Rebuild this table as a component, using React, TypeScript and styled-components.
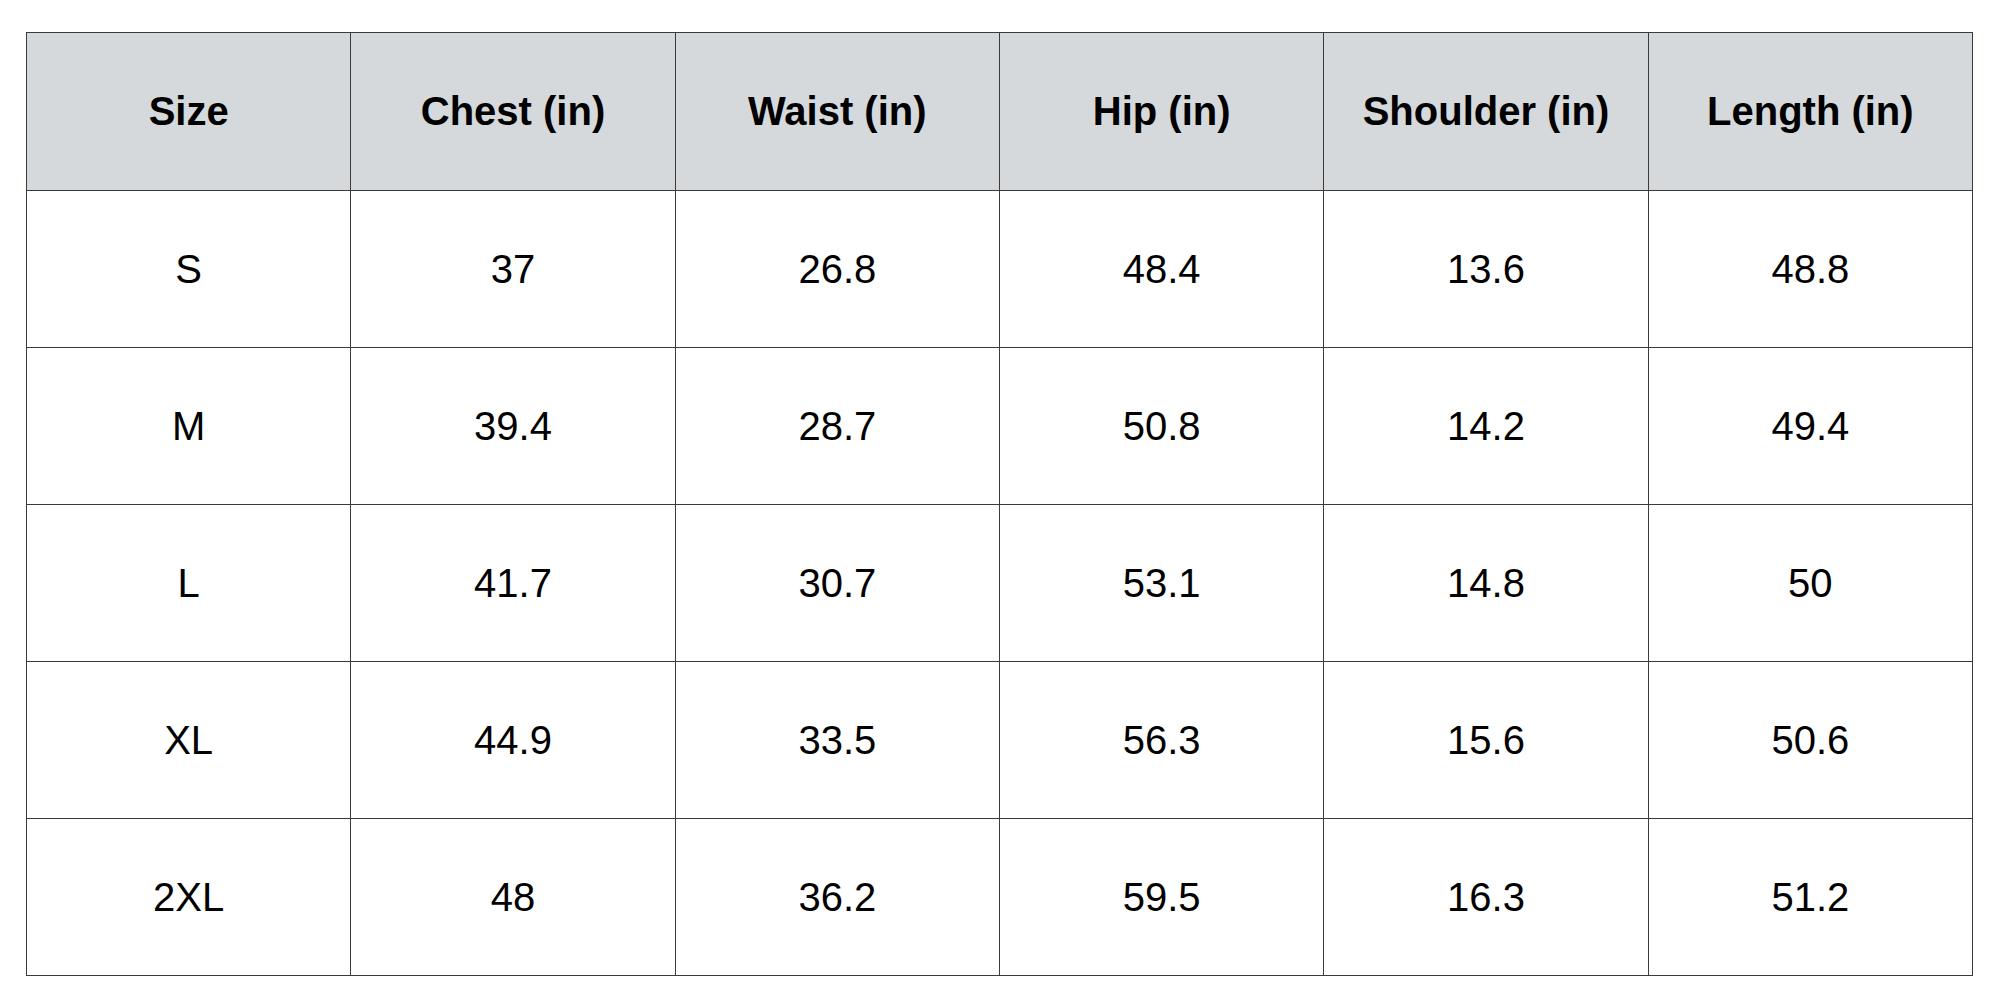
import React from "react";
import styled, { createGlobalStyle } from "styled-components";

const Global = createGlobalStyle`
  html, body { margin: 0; padding: 0; background: #ffffff; }
  body { font-family: "Liberation Sans", Arial, sans-serif; color: #000; }
`;

const Page = styled.div`
  padding: 32px 0 0 26px;
`;

const Table = styled.table`
  border-collapse: collapse;
  width: 1947px;
  table-layout: fixed;
  font-family: "Liberation Sans", Arial, sans-serif;
  font-size: 40px;
  border: 1px solid #3a3a3a;
`;

const HeadCell = styled.th`
  background: #d5d9db;
  font-weight: 700;
  height: 157px;
  padding: 0;
  text-align: center;
  vertical-align: middle;
  border: 1px solid #3a3a3a;
  color: #000;
`;

const Cell = styled.td`
  height: 156px;
  padding: 0;
  text-align: center;
  vertical-align: middle;
  border: 1px solid #3a3a3a;
  font-weight: 400;
  color: #000;
`;

const headers = ["Size", "Chest (in)", "Waist (in)", "Hip (in)", "Shoulder (in)", "Length (in)"];
const rows = [
  ["S", "37", "26.8", "48.4", "13.6", "48.8"],
  ["M", "39.4", "28.7", "50.8", "14.2", "49.4"],
  ["L", "41.7", "30.7", "53.1", "14.8", "50"],
  ["XL", "44.9", "33.5", "56.3", "15.6", "50.6"],
  ["2XL", "48", "36.2", "59.5", "16.3", "51.2"],
];

export default function App() {
  return (
    <>
      <Global />
      <Page>
        <Table>
          <thead>
            <tr>
              {headers.map((h) => (
                <HeadCell key={h}>{h}</HeadCell>
              ))}
            </tr>
          </thead>
          <tbody>
            {rows.map((r) => (
              <tr key={r[0]}>
                {r.map((c, i) => (
                  <Cell key={i}>{c}</Cell>
                ))}
              </tr>
            ))}
          </tbody>
        </Table>
      </Page>
    </>
  );
}
